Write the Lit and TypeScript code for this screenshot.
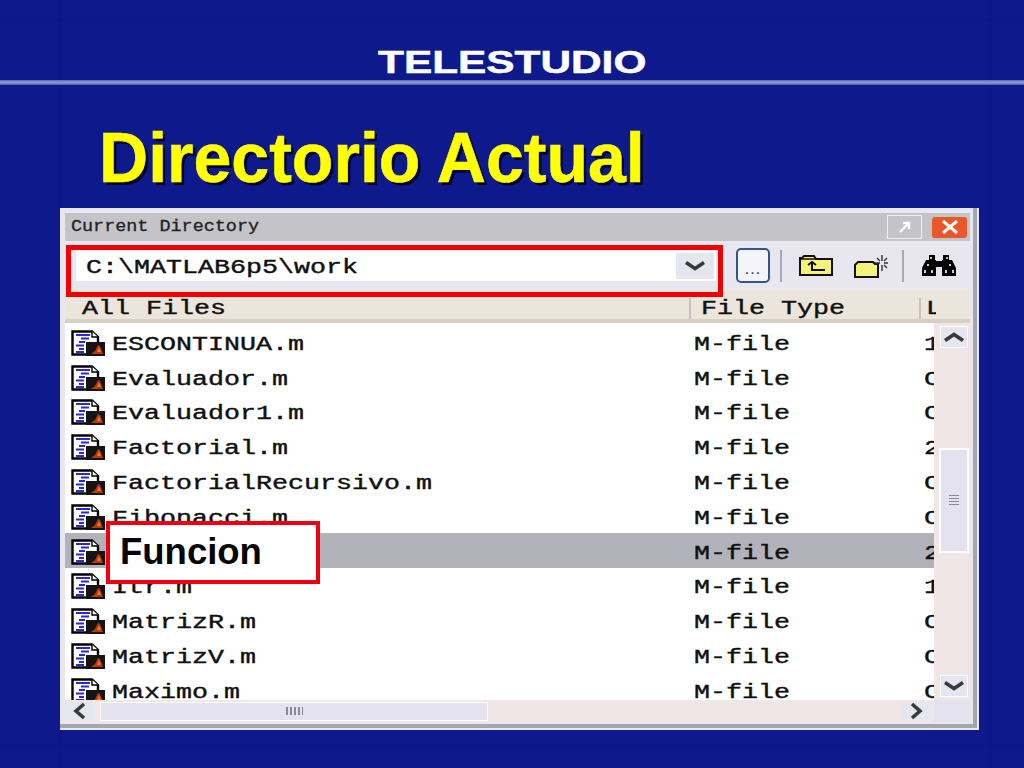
import { css, html, LitElement, svg } from "lit";
import { customElement } from "lit/decorators.js";

const files = [
  ["ESCONTINUA.m", "1"],
  ["Evaluador.m", "C"],
  ["Evaluador1.m", "C"],
  ["Factorial.m", "2"],
  ["FactorialRecursivo.m", "C"],
  ["Fibonacci.m", "C"],
  ["Funcion.m", "2"],
  ["Itr.m", "1"],
  ["MatrizR.m", "C"],
  ["MatrizV.m", "C"],
  ["Maximo.m", "C"],
];

const fileIcon = html`<svg class="file-icon" viewBox="0 0 34 26" width="34" height="26">
  <path d="M1.5 1.5H21L27 7V24.5H1.5Z" fill="#fff" stroke="#000" stroke-width="2.4" />
  <path d="M21 1.5V7H27" fill="#fff" stroke="#000" stroke-width="1.4" />
  <path d="M5 5H19M10 8.5H18M8 12H14M5 15.5H13M8 19H13M5 22H13" stroke="#2a2ad0" stroke-width="2" />
  <rect x="15" y="12" width="19" height="14" fill="#141414" />
  ${svg`<path d="M20 24L24 21L27 15L29 16L32 24Z" fill="#b8380f" />
  <path d="M26 22L28 17L30 22Z" fill="#f07820" />`}
</svg>`;

const chevron = (d: string) => html`<svg viewBox="0 0 22 10" width="22" height="10">
  <path d=${d} fill="none" stroke="#3a3a3a" stroke-width="3.6" />
</svg>`;

const chevronDown = chevron("M2 1.5L11 7.5L20 1.5");
const chevronUp = chevron("M2 8.5L11 2.5L20 8.5");
const chevronSide = (d: string) => html`<svg viewBox="0 0 14 18" width="14" height="18">
  <path d=${d} fill="none" stroke="#3a3a3a" stroke-width="3.6" />
</svg>`;

@customElement("app-root")
class AppRoot extends LitElement {
  render() {
    return html`
      <div class="guide v" style="left:60px"></div>
      <div class="guide v" style="left:990px"></div>
      <div class="guide h" style="top:20px"></div>
      <div class="guide h" style="top:745px"></div>

      <div class="logo-row"><span class="logo">TELESTUDIO</span></div>
      <div class="rule"></div>
      <h1>Directorio Actual</h1>

      <section class="window">
        <div class="titlebar">
          <span class="title-text">Current Directory</span>
          <div class="title-buttons">
            <span class="undock">
              <svg viewBox="0 0 14 14" width="14" height="14">
                <path d="M2 12L10 4M5 3H11V9" fill="none" stroke="#fff" stroke-width="2.4" />
              </svg>
            </span>
            <span class="close">
              <svg viewBox="0 0 20 14" width="20" height="14">
                <path d="M3 1L17 13M17 1L3 13" stroke="#fff" stroke-width="3" />
              </svg>
            </span>
          </div>
        </div>

        <div class="toolbar">
          <div class="combo">
            <span class="path">C:\\MATLAB6p5\\work</span>
            <span class="drop">${chevronDown}</span>
          </div>
          <button class="browse">...</button>
          <span class="sep"></span>
          <svg class="tool" style="margin-left:17px" viewBox="0 0 34 21" width="34" height="21">
            <path d="M1 20V3H3L5 1H15L17 4H33V20Z" fill="#f6f27c" stroke="#111" stroke-width="2" />
            <path d="M1 4H17" stroke="#111" stroke-width="1.5" />
            <path d="M9 10L13 7L17 10M13 8V15H26" fill="none" stroke="#111" stroke-width="2" />
          </svg>
          <svg class="tool" style="margin-left:21px" viewBox="0 0 34 24" width="34" height="24">
            <path d="M1 23V11L4 8H19L21 10H24V23Z" fill="#f6f27c" stroke="#111" stroke-width="2" />
            <path d="M28 1V7M28 11V17M21 9H26M30 9H34M23 4L26 7M30 11L33 14M33 4L30 7" stroke="#333" stroke-width="1.4" />
          </svg>
          <span class="sep" style="margin-left:14px"></span>
          <svg class="tool" style="margin-left:17px" viewBox="0 0 36 21" width="36" height="21">
            <path d="M8 0H14V5H15V21H1V13L5 5H8Z" fill="#000" />
            <path d="M22 0H28V5H31L35 13V21H21V5H22Z" fill="#000" />
            <path d="M15 6H21V12H15Z" fill="#000" />
            <path d="M10 2V4M26 2V4M7 9V11M29 9V11M4 15V18M11 15V18M25 15V18M32 15V18" stroke="#fff" stroke-width="1.6" />
          </svg>
        </div>

        <div class="header">
          <span class="col-name">All Files</span>
          <span class="col-type"><span>File Type</span></span>
          <span class="col-size"><span>L</span></span>
        </div>

        <div class="middle">
          <div class="rows">
            ${files.map(
              ([name, size], i) => html`
                <div class="row ${i === 6 ? "selected" : ""}">
                  ${fileIcon}
                  <span class="name">${name}</span>
                  <span class="type">M-file</span>
                  <span class="size">${size}</span>
                </div>
              `
            )}
          </div>
          <div class="vscroll">
            <span class="btn-v">${chevronUp}</span>
            <span class="thumb-v">
              <span class="grip-v"></span>
            </span>
            <span class="btn-v last">${chevronDown}</span>
          </div>
        </div>

        <div class="hscroll">
          <span class="btn-h">${chevronSide("M11 2L3 9L11 16")}</span>
          <span class="thumb-h"><span class="grip-h"></span></span>
          <span class="btn-h end">${chevronSide("M3 2L11 9L3 16")}</span>
          <span class="corner"></span>
        </div>
      </section>

      <div class="highlight"></div>
      <div class="callout">Funcion</div>
    `;
  }

  static styles = css`
    :host {
      display: block;
      position: relative;
      width: 1024px;
      height: 768px;
      overflow: hidden;
      background: #0e1a8c;
      font-family: "Liberation Sans", Arial, sans-serif;
    }

    .guide {
      position: absolute;
      background: #0b1682;
    }
    .guide.v {
      top: 0;
      width: 1px;
      height: 768px;
    }
    .guide.h {
      left: 0;
      width: 1024px;
      height: 1px;
    }

    .logo-row {
      position: relative;
      height: 80px;
      padding-left: 378px;
      box-sizing: border-box;
    }
    .logo {
      display: inline-block;
      margin-top: 44px;
      font-size: 31.5px;
      line-height: 37px;
      font-weight: 700;
      color: #fff;
      -webkit-text-stroke: 0.5px #fff;
      transform: scaleX(1.345);
      transform-origin: left center;
    }

    .rule {
      position: relative;
      height: 5px;
      background: linear-gradient(#5a68b8, #8e9ad6 50%, #4e5cb0);
    }

    h1 {
      position: relative;
      margin: 33px 0 0 99px;
      font-size: 70px;
      line-height: 80px;
      font-weight: 700;
      color: #ffff00;
      -webkit-text-stroke: 0.6px #ffff00;
      text-shadow: 3px 3px 0 #05052a;
      white-space: nowrap;
      transform: scaleX(0.972);
      transform-origin: left center;
    }

    .window {
      position: absolute;
      left: 60px;
      top: 208px;
      width: 919px;
      height: 522px;
      box-sizing: border-box;
      display: flex;
      flex-direction: column;
      padding: 5px 9px 8px 5px;
      background: #e8e6ee;
      box-shadow: inset -2px -2px 0 #e8e8ee, inset -6px -6px 0 #a6a6ae;
      font-family: "Liberation Mono", "DejaVu Sans Mono", monospace;
      color: #111;
    }

    .titlebar {
      flex: 0 0 28px;
      display: flex;
      align-items: center;
      justify-content: space-between;
      background: #c4c4c8;
      padding-left: 6px;
    }
    .title-text {
      font-size: 16px;
      color: #222;
      -webkit-text-stroke: 0.3px #222;
      white-space: nowrap;
      transform: scaleX(1.152);
      transform-origin: left center;
    }
    .title-buttons {
      display: flex;
      align-items: center;
      gap: 10px;
      padding-right: 3px;
    }
    .undock {
      width: 33px;
      height: 22px;
      border: 1.5px solid #eee;
      display: flex;
      align-items: center;
      justify-content: center;
    }
    .close {
      width: 35px;
      height: 21px;
      background: #e8582a;
      border-radius: 3px;
      display: flex;
      align-items: center;
      justify-content: center;
    }

    .toolbar {
      flex: 0 0 49px;
      display: flex;
      align-items: center;
      padding-left: 11px;
    }
    .combo {
      width: 640px;
      height: 31px;
      box-sizing: border-box;
      display: flex;
      align-items: center;
      justify-content: space-between;
      background: #fff;
      padding: 2px 2px 2px 10px;
    }

    /* the list font is a wide bitmap face, so the mono font gets stretched */
    .path,
    .col-name,
    .col-type span,
    .col-size span,
    .name,
    .type,
    .size {
      font-size: 20px;
      white-space: nowrap;
      -webkit-text-stroke: 0.4px #111;
      transform: scaleX(1.3333);
      transform-origin: left center;
    }
    .path {
      margin-top: 4px;
    }
    .name,
    .type,
    .size {
      margin-top: 3px;
    }
    .drop {
      width: 38px;
      height: 26px;
      background: #e6e6f0;
      display: flex;
      align-items: center;
      justify-content: center;
    }
    .browse {
      margin-left: 20px;
      width: 34px;
      height: 35px;
      padding: 6px 0 0;
      border: 2px solid #33558c;
      border-radius: 5px;
      background: #f4f4fa;
      font: 16px "Liberation Sans", sans-serif;
      letter-spacing: 1px;
      color: #333;
    }
    .sep {
      width: 2px;
      height: 32px;
      margin-left: 10px;
      background: #a8a8b0;
    }
    .tool {
      flex: none;
    }

    .header {
      flex: 0 0 33px;
      box-sizing: border-box;
      display: grid;
      grid-template-columns: 623px 230px 1fr;
      align-items: center;
      overflow: hidden;
      background: #ece5dc;
      border-bottom: 4px solid #d8d0c2;
      padding: 8px 0 0 1px;
      line-height: 21px;
    }
    .col-name {
      padding-left: 12px;
    }
    .col-type {
      padding-left: 10px;
      border-left: 2px solid #c8c2b8;
    }
    .col-type span,
    .col-size span {
      display: block;
    }
    .col-size {
      padding-left: 5px;
      width: 10px;
      overflow: hidden;
      border-left: 2px solid #c8c2b8;
    }

    .middle {
      flex: 1;
      min-height: 0;
      display: flex;
    }
    .rows {
      width: 869px;
      padding-top: 1px;
      overflow: hidden;
      background: #fff;
    }
    .row {
      height: 34.8px;
      box-sizing: border-box;
      padding: 3px 0 0 6px;
      display: grid;
      grid-template-columns: 41px 582px 230px 11px;
      align-items: center;
      overflow: hidden;
    }
    .row.selected {
      background: #b2b2ba;
    }
    .file-icon {
      display: block;
    }
    .size {
      width: 8.25px;
      overflow: hidden;
    }

    .vscroll {
      flex: 1;
      display: flex;
      flex-direction: column;
      align-items: center;
      background: #f0e6e6;
      padding: 3px 0 3px 3px;
    }
    .btn-v {
      width: 26px;
      height: 20px;
      display: flex;
      align-items: center;
      justify-content: center;
      background: #e6e6f0;
      border: 1px solid #fff;
    }
    .btn-v.last {
      margin-top: auto;
    }
    .thumb-v {
      width: 26px;
      height: 101px;
      margin-top: 100px;
      display: flex;
      align-items: center;
      justify-content: center;
      background: #e4e2ee;
      border: 2px solid #fff;
    }
    .grip-v {
      width: 10px;
      height: 11px;
      background: repeating-linear-gradient(#8a8a94 0 1px, transparent 1px 3px);
    }

    .hscroll {
      flex: 0 0 22px;
      display: flex;
      align-items: center;
      background: #f0e6e6;
    }
    .btn-h {
      width: 30px;
      height: 18px;
      display: flex;
      align-items: center;
      justify-content: center;
      background: #e6e6f0;
    }
    .btn-h.end {
      margin-left: auto;
      margin-right: 3px;
    }
    .thumb-h {
      margin-left: 5px;
      width: 386px;
      height: 17px;
      display: flex;
      align-items: center;
      justify-content: center;
      background: #e4e2ee;
      border: 1px solid #fff;
    }
    .grip-h {
      width: 17px;
      height: 8px;
      background: repeating-linear-gradient(90deg, #8a8a94 0 2px, transparent 2px 4px);
    }
    .corner {
      align-self: stretch;
      width: 36px;
      background: #e4e2ee;
    }

    .highlight {
      position: absolute;
      left: 66px;
      top: 245px;
      width: 657px;
      height: 52px;
      box-sizing: border-box;
      border: 5px solid #f00000;
    }
    .callout {
      position: absolute;
      left: 106px;
      top: 521px;
      width: 214px;
      height: 63px;
      box-sizing: border-box;
      border: 4px solid #ee0010;
      background: #fff;
      padding-left: 10px;
      font-size: 36.5px;
      line-height: 54px;
      font-weight: 700;
      color: #050505;
    }
  `;
}
